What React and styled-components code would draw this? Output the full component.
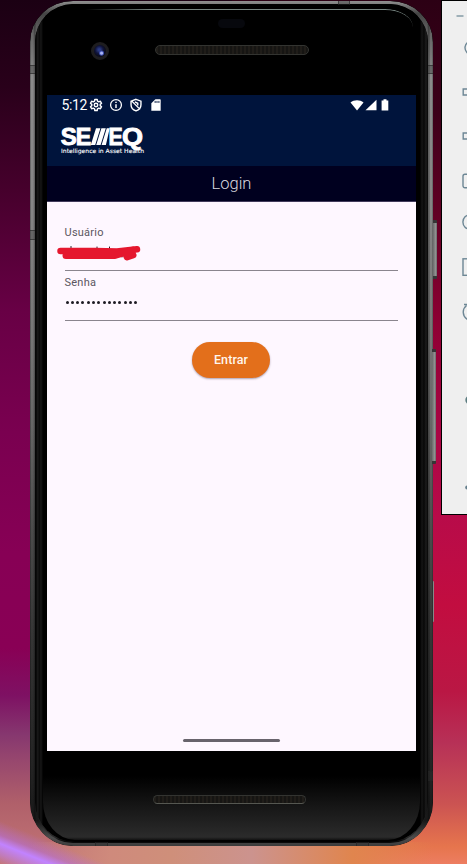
import React from 'react';
import styled, { createGlobalStyle } from 'styled-components';

const GlobalStyle = createGlobalStyle`
  * { box-sizing: border-box; }
  body { margin: 0; font-family: Roboto, sans-serif; overflow: hidden; }
`;

const Desktop = styled.main`
  display: flex;
  align-items: flex-start;
  gap: 8px;
  width: 467px;
  height: 864px;
  padding-left: 30px;
  overflow: hidden;
  background:
    linear-gradient(22deg, rgba(193, 131, 255, 0) 0, rgba(193, 131, 255, 0.5) 9px, #c183ff 19px, rgba(180, 110, 230, 0.5) 27px, rgba(180, 110, 230, 0) 40px) 0 100% / 190px 120px no-repeat,
    linear-gradient(90deg, rgba(196, 127, 128, 0) 0, #cf8a7c 20%, #cf8f7a 35%, #cc938e 55%, #e0854e 80%, rgba(234, 121, 80, 0) 100%) 30px 100% / 403px 22px no-repeat,
    linear-gradient(180deg, #1b0013 0, #29001a 10%, #46002c 22%, #680045 36%, #7a0050 50%, #870055 64%, #890055 75%, #7e1163 80.5%, #86376f 85%, #97476e 88%, #b0606a 93%, #c47777 100%) 0 0 / 232px 864px no-repeat,
    linear-gradient(180deg, #2c0014 0, #3c0019 13%, #620024 25%, #8f0034 38%, #aa0544 50%, #b80b49 60%, #c20d40 70%, #ba1744 80%, #b73157 86%, #cb5352 93%, #e6754d 98%, #ed7d61 100%);
`;

const Phone = styled.section`
  position: relative;
  display: flex;
  flex-direction: column;
  flex: none;
  width: 403px;
  height: 845px;
  margin-top: 1px;
  padding: 0 17px;
  border-radius: 43px / 41px 41px 44px 44px;
  background: linear-gradient(180deg, #000 0, #000 775px, #181818 808px, #2b2b2b 836px, #0a0a0a 840px);
`;

const Rim = styled.div`
  position: absolute;
  inset: 0;
  border-radius: inherit;
  border: solid transparent;
  border-width: 3px 5px;
  background:
    linear-gradient(90deg, rgba(0, 0, 0, 0.45) 0, transparent 1px, transparent 3px, rgba(0, 0, 0, 0.35) 5px, transparent 6px, transparent 397px, rgba(0, 0, 0, 0.4) 399px, transparent 400px, transparent 402px, rgba(0, 0, 0, 0.4) 403px) border-box,
    linear-gradient(180deg, #909090 0, #444 1.5%, #666 4%, #8b8b8b 9%, #858585 24%, #757575 40%, #666 50%, #4b4b4b 63%, #363636 75%, #222 92%, #181818 97%, #4c4c4c 99%, #3b3b3b 100%) border-box;
  mask: linear-gradient(#fff 0 0) padding-box, linear-gradient(#fff 0 0) border-box;
  mask-composite: exclude;
  pointer-events: none;
`;

const InnerRim = styled(Rim)`
  inset: 3px 5px 4px;
  border-radius: 38px 38px 40px 40px;
  border-width: 3px 8px 2px;
  background:
    linear-gradient(90deg, #070707 0, #050505 1px, #1d1d1d 3px, #070707 4px, #171717 6px, #000 8px, #000 385px, #151515 387px, #070707 389px, #1d1d1d 391px, #050505 393px) border-box;
`;

const Glint = styled.div`
  position: absolute;
  left: 55px;
  right: 20px;
  top: 8px;
  height: 20px;
  border-top: 1.5px solid #798783;
  border-radius: 0 28px 0 0 / 0 18px 0 0;
  mask: linear-gradient(90deg, transparent, #000 20%);
`;

const FrameMark = styled.i`
  position: absolute;
  left: ${({ $x }) => $x}px;
  top: ${({ $y }) => $y}px;
  width: ${({ $w }) => $w}px;
  height: ${({ $h }) => $h}px;
  border: solid rgba(35, 35, 35, 0.6);
  border-width: ${({ $w, $h }) => ($w > $h ? '0 1px' : '1px 0')};
  background: rgba(50, 50, 50, 0.35);
`;

const SideButton = styled.i`
  position: absolute;
  left: ${({ $x }) => $x}px;
  top: ${({ $y }) => $y}px;
  width: ${({ $w }) => $w || 4}px;
  height: ${({ $h }) => $h}px;
  border: solid #353535;
  border-width: ${({ $w }) => ($w ? 0 : '3px 0')};
  border-radius: 0 1px 1px 0;
  background: linear-gradient(90deg, #696969, #949494 70%, #626262);
`;

const Forehead = styled.header`
  position: relative;
  flex: none;
  display: grid;
  grid-template-columns: 44px 17px 47px 154px;
  grid-template-rows: 94px;
  align-items: start;
`;

const Camera = styled.i`
  grid-column: 2;
  width: 18px;
  height: 18px;
  margin-top: 41px;
  border-radius: 50%;
  border: 3px solid #1e1d1f;
  background: radial-gradient(circle at 63% 68%, #a9b4f5 0 1px, #3f50b0 2px, transparent 3px),
    radial-gradient(circle at 44% 40%, #2b3b85 0 1px, #10143a 4px, #0c0d1e 6px);
`;

const Sensor = styled.i`
  position: absolute;
  left: 171px;
  top: 18px;
  width: 27px;
  height: 9px;
  border-radius: 5px;
  background: #07080d;
`;

const Grille = styled.i`
  display: block;
  width: ${({ $bottom }) => ($bottom ? 153 : 154)}px;
  height: ${({ $bottom }) => ($bottom ? 9 : 10)}px;
  margin: ${({ $bottom }) => ($bottom ? '44px 0 0 106px' : '44px 0 0')};
  grid-column: 4;
  border: 1px solid #333431;
  border-bottom-color: ${({ $bottom }) => ($bottom ? '#555751' : '#333431')};
  border-radius: 5px;
  background: repeating-linear-gradient(90deg, #201d19 0 2px, #161513 2px 4px);
`;

const Screen = styled.div`
  display: flex;
  flex-direction: column;
  flex: none;
  width: 369px;
  height: 656px;
  background: #fef7ff;
`;

const BrandBar = styled.div`
  height: 71px;
  background: #00143c;
  color: #fff;
`;

const StatusBar = styled.div`
  display: flex;
  align-items: center;
  height: 20px;
  padding: 0 24.5px 0 14.5px;
  font-size: 14px;
  line-height: 20px;
`;

const Clock = styled.span`
  width: 27px;
  letter-spacing: -0.4px;
`;

const StatusIcons = styled.div`
  display: flex;
  align-items: center;
  gap: 6px;
  svg { display: block; }
`;

const SignalIcons = styled(StatusIcons)`
  margin-left: auto;
  gap: 0;
`;

const Logo = styled.svg`
  display: block;
  overflow: visible;
  margin: 12px 0 0 13px;
`;

const TitleBar = styled.h1`
  height: 36px;
  margin: 0;
  border-bottom: 1px solid #413b5b;
  background: #00001f;
  color: #d8d8df;
  font-size: 16.5px;
  font-weight: 350;
  line-height: 36px;
  text-align: center;
`;

const Form = styled.form`
  display: flex;
  flex-direction: column;
  align-items: center;
  flex: 1;
  padding: 21px 18.5px 0 17.5px;
`;

const Field = styled.label`
  position: relative;
  display: flex;
  flex-direction: column;
  width: 333px;
  height: ${({ $h }) => $h}px;
  padding-top: ${({ $pad }) => $pad}px;
  border-bottom: 1px solid #8a858e;
`;

const FieldLabel = styled.span`
  color: #5b5660;
  font-size: 11px;
  line-height: 14px;
  letter-spacing: 0.25px;
`;

const Dots = styled.span`
  display: flex;
  gap: 2.3px;
  padding: 11px 0 0 1px;
`;

const Dot = styled.i`
  width: 3px;
  height: 3px;
  border-radius: 50%;
  background: #1d1a23;
`;

const Scribble = styled.svg`
  position: absolute;
  left: -7.5px;
  top: 18px;
`;

const SubmitButton = styled.button`
  width: 78px;
  height: 36px;
  margin-top: 21px;
  padding: 0;
  border: 0;
  border-radius: 18px;
  background: #e36f1b;
  color: #fff6ee;
  font: 500 12.5px/36px Roboto, sans-serif;
  letter-spacing: 0.1px;
  box-shadow: 0 1px 2px rgba(60, 40, 70, 0.42);
`;

const HomeHandle = styled.i`
  width: 97px;
  height: 3px;
  margin: auto auto 9.5px 135.5px;
  border-radius: 2px;
  background: #68636c;
`;

const Panel = styled.aside`
  display: grid;
  grid-template-rows: 29px 36px 52px 36px 54px 28px 62px 28px 148px 26px;
  flex: none;
  align-items: center;
  width: 50px;
  height: 515px;
  border: 1px solid #000;
  background: #efefef;
`;

const ToolIcon = styled.svg`
  display: block;
  width: 20px;
  height: 20px;
  margin-left: ${({ $x }) => $x || 20}px;
  fill: none;
  stroke: #6d8795;
  stroke-width: 1.4;
`;

function Wordmark() {
  return (
    <Logo width="86" height="29" viewBox="0 0 86 29" fill="#fff">
      <g fontFamily="Liberation Sans, sans-serif" fontWeight="700" fontSize="23.2" stroke="#fff" strokeWidth="0.9">
        <text x="0.7" y="17.6" textLength="16" lengthAdjust="spacingAndGlyphs">S</text>
        <text x="15.8" y="17.6" textLength="15.5" lengthAdjust="spacingAndGlyphs">E</text>
        <text x="48.6" y="17.6" textLength="14.2" lengthAdjust="spacingAndGlyphs">E</text>
        <text x="62" y="17.6" textLength="21" lengthAdjust="spacingAndGlyphs">Q</text>
      </g>
      <path d="M36 1.2h4.400L35.200 18H30.800zM41.400 1.200h4.400L40.600 18h-4.400zM46.800 1.200h2.900L45.900 18h-4.300z" />
      <text x="1" y="26" fontFamily="DejaVu Sans, sans-serif" fontSize="5.9" stroke="#fff" strokeWidth="0.1" textLength="83" lengthAdjust="spacingAndGlyphs">
        Intelligence in Asset Health
      </text>
    </Logo>
  );
}

function NotificationIcons() {
  return (
    <StatusIcons>
      <svg width="14" height="14" viewBox="0 0 24 24" fill="none" stroke="#fff" strokeWidth="2.5" strokeLinejoin="round">
        <path d="M10 2.5h4l.6 3 2 1.1 2.9-1 2 3.4-2.3 2v2l2.3 2-2 3.4-2.9-1-2 1.1-.6 3h-4l-.6-3-2-1.1-2.9 1-2-3.400 2.300-2v-2l-2.300-2 2-3.400 2.900 1 2-1.100z" />
        <circle cx="12" cy="12" r="3" />
      </svg>
      <svg width="14" height="14" viewBox="0 0 24 24" fill="none" stroke="#fff" strokeWidth="2.2">
        <circle cx="12" cy="12" r="9.3" />
        <path d="M12 10.5v6.8M12 6.5v2.2" strokeWidth="2.5" />
      </svg>
      <svg width="14" height="14" viewBox="0 0 24 24" fill="none" stroke="#fff" strokeWidth="2.4">
        <path d="M12 2.3l8.5 3.2v6c0 5-3.6 9-8.5 10.5C7.1 20.5 3.5 16.5 3.5 11.5v-6zM4 4.5l15 15" />
        <path d="M10 6.5l5 2.5v4" />
      </svg>
      <svg width="14" height="14" viewBox="0 0 24 24">
        <path fill="#fff" d="M19 2h-8L4 9v13h16V3z" />
        <path stroke="#00143c" strokeWidth="1.6" d="M10.5 5v3.5M13.7 5v3.5M17 5v3.5" />
      </svg>
    </StatusIcons>
  );
}

function Connectivity() {
  return (
    <SignalIcons>
      <svg width="14" height="12" viewBox="0 0 14 12"><path fill="#fff" d="M.5 3.500C4 .4 10 .4 13.500 3.500L7 11.500z" /></svg>
      <svg width="14" height="12" viewBox="0 0 14 12"><path fill="#fff" d="M12.500 .7V11.300H1.500z" /></svg>
      <svg width="14" height="12" viewBox="0 0 14 12"><path fill="#fff" d="M5.500 .3h3v1.200h1.800v10H3.600v-10h1.900z" /></svg>
    </SignalIcons>
  );
}

function EmulatorTools() {
  return (
    <Panel>
      <ToolIcon $x={14}><path d="M.5 10h7" stroke="#9fb0b8" strokeWidth="2" /></ToolIcon>
      <ToolIcon $x={21}><path d="M5 4a7 7 0 1 0 8 0M9 1v8" /></ToolIcon>
      <ToolIcon><path d="M5 7H1.200v6H5l6 4V3z" /></ToolIcon>
      <ToolIcon><path d="M5 7H1.200v6H5l6 4V3z" /></ToolIcon>
      <ToolIcon><rect x="1" y="3.3" width="18" height="13.5" rx="2" /></ToolIcon>
      <ToolIcon><circle cx="8.2" cy="10" r="7.3" /></ToolIcon>
      <ToolIcon><rect x="1" y="1.8" width="17" height="16.5" /></ToolIcon>
      <ToolIcon><path d="M2 2.500h6M4.500 3.500C0 7 0 14 5.500 17.500" /></ToolIcon>
      <ToolIcon $x={23}><circle cx="5" cy="10" r="4.7" fill="#5c7c80" stroke="none" /></ToolIcon>
      <ToolIcon $x={23}><circle cx="2.2" cy="10.5" r="2" fill="#647e8b" stroke="none" /></ToolIcon>
    </Panel>
  );
}

export default function App() {
  return (
    <>
      <GlobalStyle />
      <Desktop>
        <Phone>
          <Rim />
          <InnerRim />
          <Glint />
          <FrameMark $x={308} $y={0} $w={12} $h={4} />
          <FrameMark $x={0} $y={64} $w={5} $h={9} />
          <FrameMark $x={398} $y={64} $w={5} $h={9} />
          <FrameMark $x={0} $y={229} $w={5} $h={10} />
          <FrameMark $x={398} $y={770} $w={5} $h={10} />
          <FrameMark $x={65} $y={841} $w={13} $h={4} />
          <FrameMark $x={326} $y={841} $w={13} $h={4} />
          <SideButton $x={403} $y={219} $h={59} />
          <SideButton $x={402} $y={348} $h={115} />
          <SideButton $x={403} $y={580} $h={41} $w={1} />
          <Forehead>
            <Camera />
            <Sensor />
            <Grille />
          </Forehead>
          <Screen>
            <BrandBar>
              <StatusBar>
                <Clock>5:12</Clock>
                <NotificationIcons />
                <Connectivity />
              </StatusBar>
              <Wordmark />
            </BrandBar>
            <TitleBar>Login</TitleBar>
            <Form>
              <Field $h={48} $pad={3}>
                <FieldLabel>Usuário</FieldLabel>
                <Scribble width="86" height="24" viewBox="0 0 86 24" fill="none" stroke="#e5172e" strokeLinecap="round" strokeLinejoin="round">
                  <path d="M14 5.5v2M40 6v2M52.5 6v2M65 14v2" stroke="#241b25" strokeWidth="1" />
                  <path d="M3.5 10L38 10 60 10.5 80 8.3" strokeWidth="6.5" />
                  <path d="M9 14.5H58L76 9M70 16l6-2" strokeWidth="7" />
                </Scribble>
              </Field>
              <Field $h={50} $pad={5}>
                <FieldLabel>Senha</FieldLabel>
                <Dots>{Array.from({ length: 14 }, (_, i) => <Dot key={i} />)}</Dots>
              </Field>
              <SubmitButton type="button">Entrar</SubmitButton>
            </Form>
            <HomeHandle />
          </Screen>
          <Grille $bottom />
        </Phone>
        <EmulatorTools />
      </Desktop>
    </>
  );
}
